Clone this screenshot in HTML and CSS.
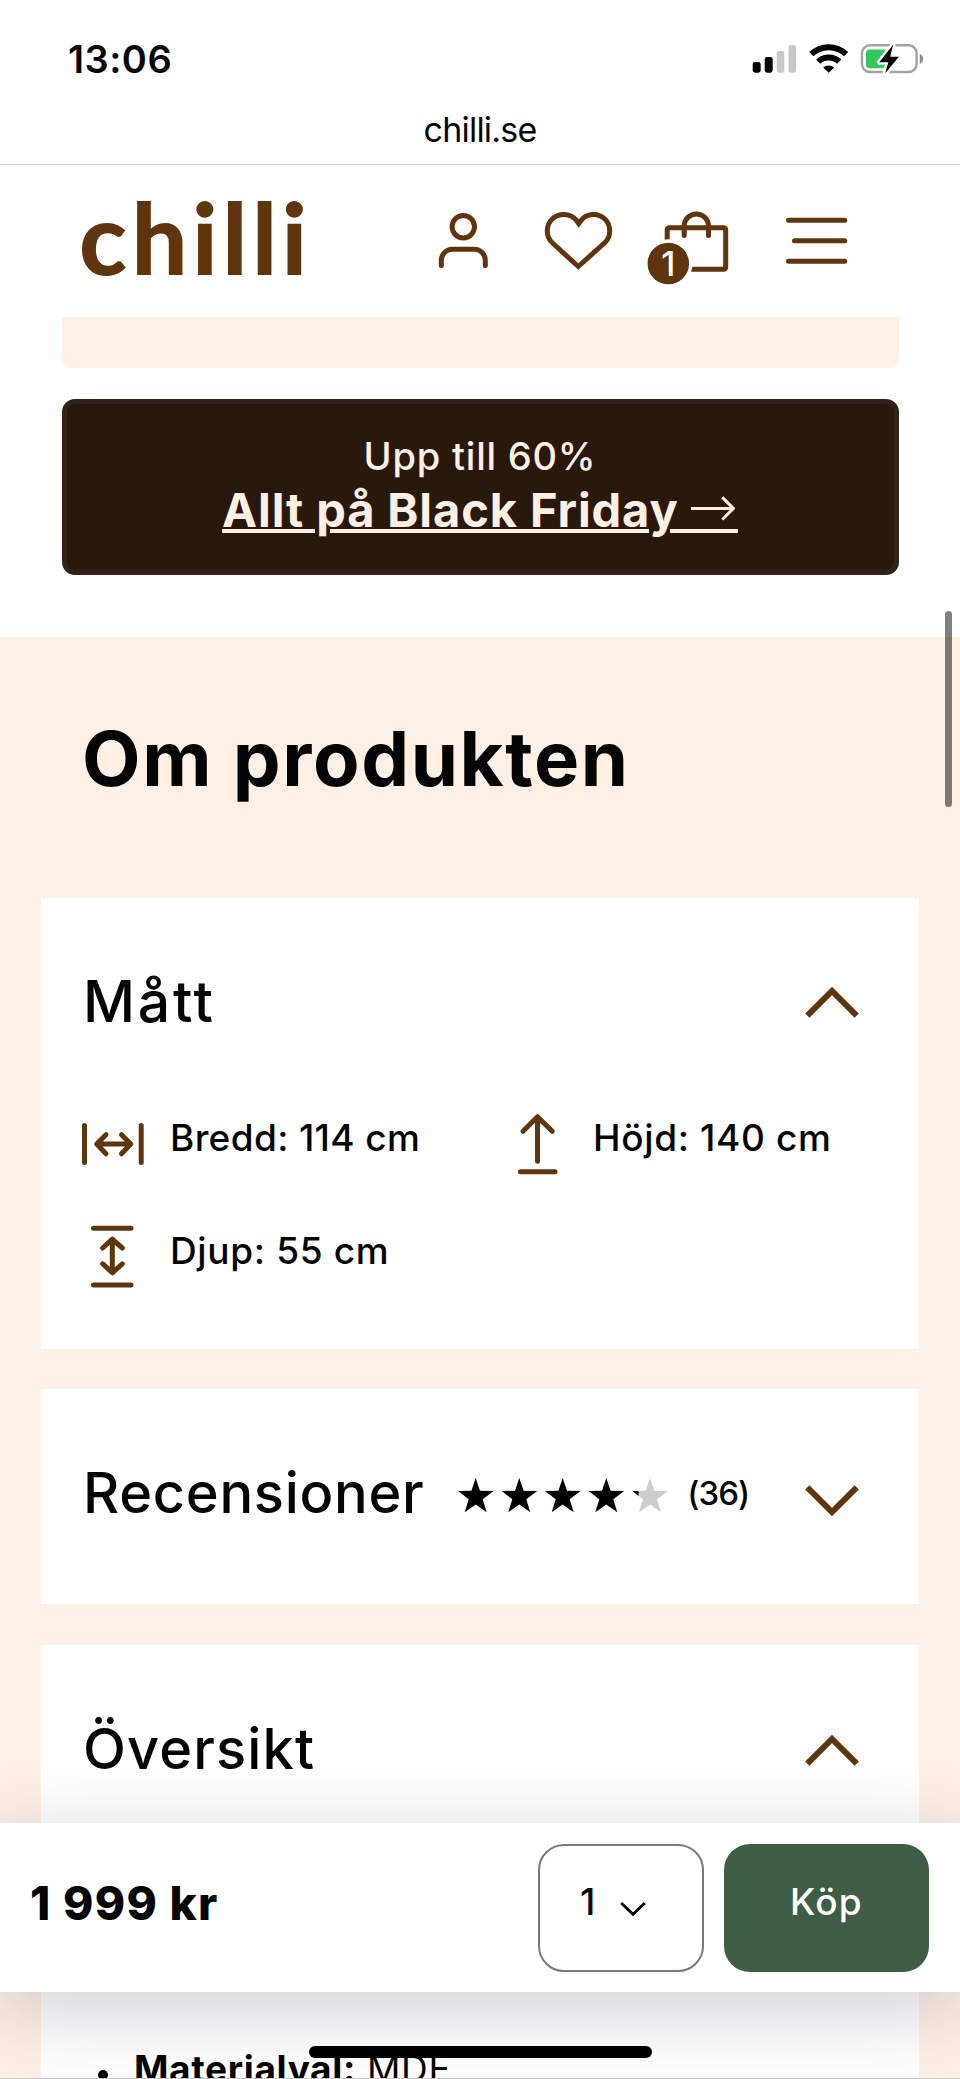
FILE: index.html
```html
<!DOCTYPE html>
<html lang="sv">
<head>
<meta charset="utf-8">
<title>chilli.se</title>
<link rel="stylesheet" href="styles.css">
</head>
<body>
<div class="screen">
  <div class="status">
    <span class="time">13:06</span>
    <svg class="status-icons" width="172" height="34" viewBox="752 42 172 34">
      <rect x="752.700" y="62" width="8" height="10.700" rx="2.400"/>
      <rect x="764.700" y="57" width="8" height="15.700" rx="2.400"/>
      <rect x="776.700" y="51" width="7.600" height="21.700" rx="2.400" fill="#c9c9c9"/>
      <rect x="788.500" y="45" width="7.600" height="27.700" rx="2.400" fill="#c9c9c9"/>
      <path d="M811.300 54.200a25 25 0 0 1 34.800 0M818.200 61.600a15.600 15.600 0 0 1 21 0" fill="none" stroke="#000" stroke-width="6"/>
      <path d="M823.200 67.600a8.600 8.600 0 0 1 11 0L828.700 72.800z"/>
      <rect x="862" y="45.200" width="54.600" height="26.800" rx="8" fill="none" stroke="#a3a3a3" stroke-width="2.400"/>
      <path d="M870 49.500h16V68.300h-16a4 4 0 0 1-4-4V53.500a4 4 0 0 1 4-4z" fill="#34c759"/>
      <path d="M919.800 54c2 .8 3.400 2.600 3.400 5s-1.400 4.200-3.400 5z" fill="#8e8e8e"/>
      <path d="M893.200 44.500L879.300 62.300H888.300L885.200 73.300L898.900 56.800H890.200z" stroke="#fff" stroke-width="5" paint-order="stroke" stroke-linejoin="round"/>
    </svg>
  </div>
  <div class="url">chilli.se</div>

  <header class="header">
    <span class="logo">chilli</span>
    <nav class="nav">
      <svg width="70" height="84" viewBox="430 205 70 84">
        <circle cx="463.300" cy="226.700" r="11.200"/>
        <path d="M441.300 265.500v-5.300a11 11 0 0 1 11-11h22a11 11 0 0 1 11 11v5.300"/>
      </svg>
      <svg width="85" height="84" viewBox="530 205 85 84">
        <path class="miter" d="M578.300 266.500L552 242.500C545.500 236 546 225 552 219.300C559.500 212 571 213.500 576.500 220.500L578.700 223.500L581 220.500C586.500 213.500 597.500 212 605 219.300C611 225 611.500 236 605 242.500z"/>
      </svg>
      <svg width="95" height="84" viewBox="645 205 95 84">
        <rect x="667.200" y="227.700" width="58.500" height="41.500" rx="2"/>
        <path d="M684.200 235.500v-10.500a12.200 12.200 0 0 1 24.300 0V235.500"/>
        <circle class="badge" cx="668.300" cy="263.500" r="22.500"/>
        <text class="badge-text" x="668.300" y="276">1</text>
      </svg>
      <svg width="80" height="84" viewBox="770 205 80 84">
        <path d="M788.500 220.200h56.300M794.500 240.700h50.300M788.500 261.200h56.300"/>
      </svg>
    </nav>
  </header>

  <div class="promo">
    <div class="strip"></div>
    <div class="banner">
      <div class="banner-sub">Upp till 60%</div>
      <a class="banner-link">Allt på Black Friday <span class="arrow">→</span></a>
    </div>
  </div>

  <section class="about">
    <h1>Om produkten</h1>

    <article class="card card-size">
      <div class="card-head">
        <h2>Mått</h2>
        <svg class="chevron up" width="54" height="32" viewBox="0 0 54 32"><path d="M2.300 28.700L27 4L51.700 28.700"/></svg>
      </div>
      <div class="sizes">
        <div class="size">
          <svg width="61" height="69" viewBox="82 1103 61 69"><path d="M84.500 1125.500v37M141.200 1125.500v37M97 1144h33.500M106 1134.700l-9.300 9.300 9.300 9.800M121.500 1134.700l9.300 9.300-9.300 9.800"/></svg>
          <span class="tight">Bredd: 114 cm</span>
        </div>
        <div class="size">
          <svg width="61" height="69" viewBox="505 1103 61 69"><path d="M537.500 1116.800v44.500M523 1131.300l14.500-14.500 14.800 14.500M520.500 1171.700h34.500"/></svg>
          <span>Höjd: 140 cm</span>
        </div>
        <div class="size">
          <svg width="61" height="69" viewBox="82 1216 61 69"><path d="M93.500 1228.300h37.500M93.500 1285h37.500M112.300 1240v32.500M102.700 1248l9.600-8.800 10 8.800M102.700 1263.800l9.600 9 10-9"/></svg>
          <span>Djup: 55 cm</span>
        </div>
      </div>
    </article>

    <article class="card card-reviews">
      <div class="card-head">
        <h2>Recensioner</h2>
        <svg class="stars" width="211" height="35" viewBox="0 0 211 35">
          <defs>
            <path id="star" d="M18 0L22.300 12.800L35.900 13L25 21.200L29 34.300L18 26.500L7 34.300L11 21.200L.3 13L13.700 12.800z"/>
            <clipPath id="part"><rect x="174" y="0" width="7.500" height="35"/></clipPath>
          </defs>
          <use href="#star" x=".7"/>
          <use href="#star" x="44.300"/>
          <use href="#star" x="87.700"/>
          <use href="#star" x="131.300"/>
          <use href="#star" x="175" fill="#ccc"/>
          <g clip-path="url(#part)"><use href="#star" x="175"/></g>
        </svg>
        <span class="count">(36)</span>
        <svg class="chevron down" width="54" height="32" viewBox="0 0 54 32"><path d="M2.300 3.300L27 28L51.700 3.300"/></svg>
      </div>
    </article>

    <article class="card card-overview">
      <div class="card-head">
        <h2>Översikt</h2>
        <svg class="chevron overview" width="54" height="32" viewBox="0 0 54 32"><path d="M2.300 28.700L27 4L51.700 28.700"/></svg>
      </div>
      <div class="spec"><i class="dot"></i><span><b>Materialval:</b> MDF</span></div>
    </article>
  </section>

  <div class="buybar">
    <span class="price">1 999 kr</span>
    <div class="qty">
      <span>1</span>
      <svg width="26" height="16" viewBox="0 0 26 16"><path d="M1.200 2L13 13.200L24.800 2" fill="none" stroke="#000" stroke-width="2.800"/></svg>
    </div>
    <div class="buy">Köp</div>
  </div>
  <div class="scrollbar"></div>
  <div class="home"></div>
</div>
</body>
</html>
```
FILE: styles.css
```css
* { box-sizing: border-box; }

body {
  margin: 0;
  background: #fff;
  color: #040404;
  font-family: Inter, "Liberation Sans", sans-serif;
}

.screen {
  position: relative;
  width: 960px;
  height: 2079px;
  overflow: hidden;
  border-bottom: 1px solid #c8c8cb;
  background: #fff;
}

svg { display: block; flex: none; overflow: visible; }

/* Phone status and address rows */
.status {
  display: flex;
  align-items: center;
  justify-content: space-between;
  height: 90px;
  padding: 27px 36px 0 68px;
}
.time { font-size: 38px; font-weight: 600; letter-spacing: .5px; }
.url {
  height: 75px;
  padding-top: 5px;
  border-bottom: 1px solid #d4d4d4;
  font-size: 34px;
  line-height: 70px;
  letter-spacing: -.8px;
  text-align: center;
}

/* Site header */
.header {
  display: flex;
  justify-content: space-between;
  height: 152px;
  padding: 0 110px 0 79px;
}
.logo {
  color: #5e350d;
  font-family: Lato, sans-serif;
  font-size: 99px;
  font-weight: 900;
  line-height: 143px;
  letter-spacing: 4.5px;
}
.nav { display: flex; gap: 30px; padding-top: 40px; }
.nav svg {
  fill: none;
  stroke: #5e350d;
  stroke-width: 5;
  stroke-linecap: round;
  stroke-linejoin: round;
}
.nav .miter { stroke-linejoin: miter; }
.nav .badge { fill: #5e350d; stroke: #fff; stroke-width: 3.5; }
.nav .badge-text {
  fill: #fff;
  stroke: none;
  font-size: 34px;
  font-weight: 500;
  text-anchor: middle;
}

/* Campaign */
.promo { padding: 0 61.500px 62px; }
.strip { height: 51px; background: #fff0e5; border-radius: 0 0 10px 10px; }
.banner {
  height: 176px;
  margin-top: 31px;
  padding-top: 27px;
  border: 5px solid #33221a;
  border-radius: 13px;
  background: #29190d;
  color: #fff0e5;
  text-align: center;
}
.banner-sub { font-size: 38px; font-weight: 450; line-height: 50px; letter-spacing: .8px; }
.banner-link {
  display: block;
  height: 57px;
  font-size: 47px;
  font-weight: 700;
  line-height: 57px;
  letter-spacing: .9px;
  text-decoration: underline;
  text-decoration-thickness: 3.5px;
  text-underline-offset: 2px;
  white-space: nowrap;
}
.arrow {
  margin-left: -3px;
  font-family: "Noto Sans", "DejaVu Sans", sans-serif;
  font-size: 60px;
  font-weight: 300;
  letter-spacing: 0;
  line-height: 0;
}

/* Product information */
.about { height: 1442px; padding: 0 41px; background: #fff0e5; }
h1 {
  height: 261px;
  margin: 0;
  padding-left: 41px;
  font-size: 76px;
  font-weight: 700;
  line-height: 242px;
  letter-spacing: 1.6px;
}
.card { background: #fff; padding: 0 60px 0 42px; }
.card-head { display: flex; align-items: center; height: 205px; }
h2 {
  margin: 0;
  padding-top: 3px;
  font-size: 56px;
  font-weight: 500;
  line-height: 202px;
  letter-spacing: .7px;
}
.chevron { margin-left: auto; fill: none; stroke: #5e350d; stroke-width: 6; }
.chevron.up { margin-top: 4px; }
.chevron.down { margin-top: 16px; }
.chevron.overview { margin-top: 6px; }

.card-size { height: 451px; }
.card-size h2 { font-size: 57px; letter-spacing: 2.8px; }
.sizes {
  display: grid;
  grid-template-columns: 423px 1fr;
  row-gap: 44px;
  margin-left: -1px;
  font-size: 37px;
  font-weight: 500;
  line-height: 69px;
  letter-spacing: .65px;
  white-space: nowrap;
}
.tight { letter-spacing: .35px; }
.size { display: flex; gap: 27px; }
.size svg { fill: none; stroke: #5e350d; stroke-width: 5; stroke-linecap: round; stroke-linejoin: round; }

.card-reviews { height: 215px; margin-top: 40px; }
.stars { margin: 8px 0 0 33px; }
.count { margin: 2px 0 0 19px; font-size: 33px; font-weight: 500; letter-spacing: -1px; }

.card-overview { height: 434px; margin-top: 41px; }
.card-overview h2 { letter-spacing: 1.1px; }
.spec {
  display: flex;
  align-items: center;
  gap: 26px;
  margin-top: 189px;
  padding-left: 15px;
  font-size: 37px;
  line-height: 60px;
  letter-spacing: .65px;
}
.dot { width: 10px; height: 10px; margin-top: 12px; border-radius: 50%; background: #040404; }

/* Purchase bar floats over the page */
.buybar {
  position: absolute;
  left: 0;
  top: 1823px;
  display: flex;
  align-items: center;
  width: 960px;
  height: 169px;
  padding: 0 31px 0 30px;
  background: #fff;
  box-shadow: 0 17px 80px rgba(22, 20, 50, .21);
}
.price { margin: 0 auto 9px 0; font-size: 46px; font-weight: 800; letter-spacing: 1.3px; }
.qty {
  display: flex;
  align-items: center;
  gap: 25px;
  width: 166px;
  height: 128px;
  padding: 0 0 12px 40px;
  border: 2px solid #7a7a7a;
  border-radius: 26px;
  font-size: 37px;
  font-weight: 500;
}
.qty svg { margin-top: 15px; }
.buy {
  width: 205px;
  height: 128px;
  margin-left: 20px;
  border-radius: 26px;
  background: #3f5d45;
  color: #fff;
  font-size: 37px;
  font-weight: 500;
  line-height: 116px;
  letter-spacing: 1.3px;
  text-align: center;
}

/* System overlays */
.scrollbar {
  position: absolute;
  left: 945px;
  top: 611px;
  width: 7px;
  height: 196px;
  border-radius: 4px;
  background: rgba(0, 0, 0, .5);
}
.home {
  position: absolute;
  left: 309px;
  top: 2046px;
  width: 343px;
  height: 12px;
  border-radius: 6px;
  background: #000;
}
```
